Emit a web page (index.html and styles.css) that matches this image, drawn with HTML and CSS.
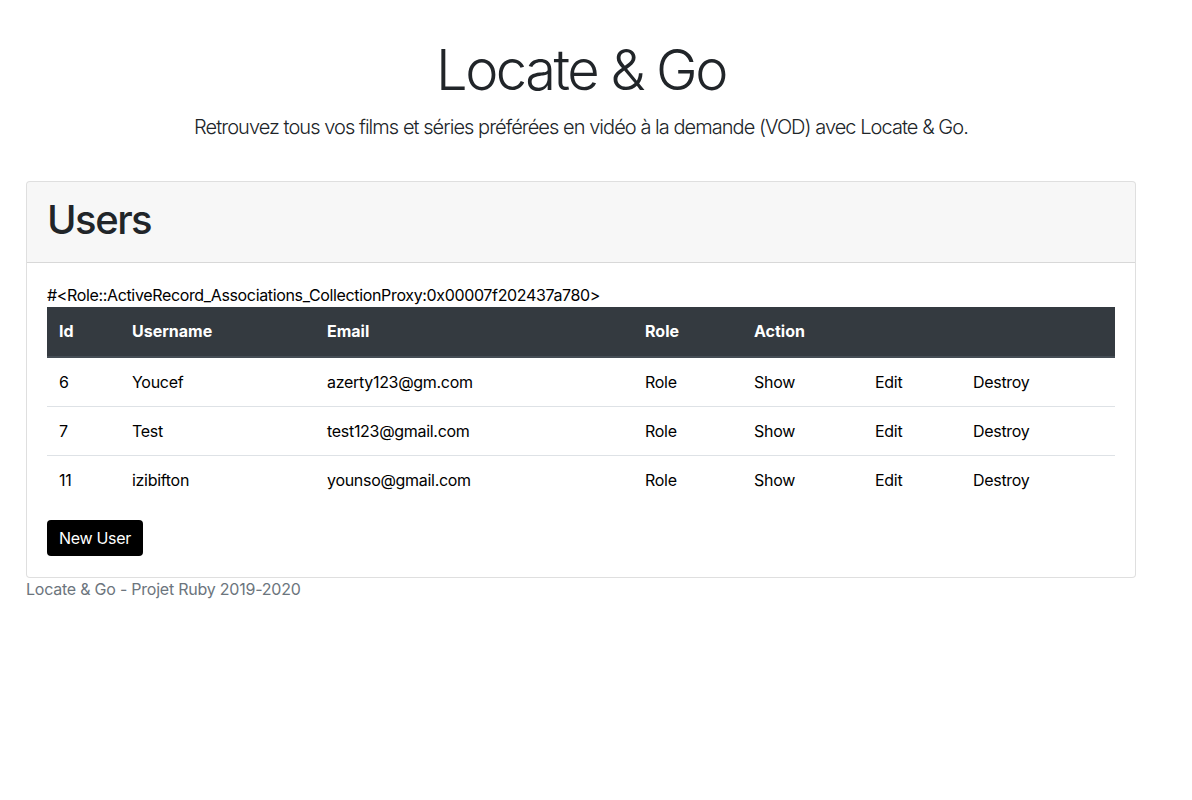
FILE: index.html
```html
<!DOCTYPE html>
<html lang="fr">
<head>
<meta charset="utf-8">
<title>Locate &amp; Go</title>
<link rel="stylesheet" href="styles.css">
</head>
<body>
<div class="page">
  <header class="hero">
    <h1 class="hero-title">Locate &amp; Go</h1>
    <p class="hero-lead">Retrouvez tous vos films et séries préférées en vidéo à la demande (VOD) avec Locate &amp; Go.</p>
  </header>
  <section class="card">
    <div class="card-header">
      <h1 class="card-title">Users</h1>
    </div>
    <div class="card-body">
      <p class="proxy">#&lt;Role::ActiveRecord_Associations_CollectionProxy:0x00007f202437a780&gt;</p>
      <table class="users">
        <colgroup>
          <col class="c-id"><col class="c-user"><col class="c-email"><col class="c-role"><col class="c-show"><col class="c-edit"><col class="c-destroy">
        </colgroup>
        <thead>
          <tr><th>Id</th><th>Username</th><th>Email</th><th>Role</th><th colspan="3">Action</th></tr>
        </thead>
        <tbody>
          <tr><td>6</td><td>Youcef</td><td>azerty123@gm.com</td><td><a href="#">Role</a></td><td><a href="#">Show</a></td><td><a href="#">Edit</a></td><td><a href="#">Destroy</a></td></tr>
          <tr><td>7</td><td>Test</td><td>test123@gmail.com</td><td><a href="#">Role</a></td><td><a href="#">Show</a></td><td><a href="#">Edit</a></td><td><a href="#">Destroy</a></td></tr>
          <tr><td>11</td><td>izibifton</td><td>younso@gmail.com</td><td><a href="#">Role</a></td><td><a href="#">Show</a></td><td><a href="#">Edit</a></td><td><a href="#">Destroy</a></td></tr>
        </tbody>
      </table>
      <a class="btn" href="#">New User</a>
    </div>
  </section>
  <footer class="footer">Locate &amp; Go - Projet Ruby 2019-2020</footer>
</div>
</body>
</html>
```
FILE: styles.css
```css
* { box-sizing: border-box; }
html, body { margin: 0; padding: 0; background: #fff; }
body {
  font-family: Inter, "Noto Sans", "Liberation Sans", sans-serif;
  font-size: 16px;
  line-height: 1.5;
  color: #212529;
  letter-spacing: -0.3px;
}
.page {
  width: 1110px;
  margin-left: 26px;
}
.hero {
  text-align: center;
  padding-top: 37px;
  padding-bottom: 23px;
}
.hero-title {
  margin: 0 0 8px;
  font-size: 56px;
  font-weight: 300;
  line-height: 1.2;
  letter-spacing: -2.5px;
}
.hero-lead {
  margin: 0 0 16px;
  font-size: 20px;
  font-weight: 300;
  line-height: 1.5;
  letter-spacing: -0.95px;
}
.card {
  border: 1px solid rgba(0,0,0,.125);
  border-radius: 4px;
  background: #fff;
}
.card-header {
  background: rgba(0,0,0,.03);
  border-bottom: 1px solid rgba(0,0,0,.125);
  padding: 14px 20px 10px;
  border-radius: 3px 3px 0 0;
}
.card-title {
  margin: 0 0 8px;
  font-size: 40px;
  font-weight: 500;
  line-height: 1.2;
  letter-spacing: -1.5px;
}
.card-body {
  padding: 20px 20px 21px;
}
.proxy {
  margin: 0;
  color: #000;
  letter-spacing: -0.35px;
}
.users {
  width: 100%;
  border-collapse: collapse;
  margin-bottom: 16px;
  color: #000;
}
.c-id { width: 73px; }
.c-user { width: 195px; }
.c-email { width: 318px; }
.c-role { width: 109px; }
.c-show { width: 121px; }
.c-edit { width: 98px; }
.c-destroy { width: 154px; }
.users th, .users td {
  padding: 12px;
  text-align: left;
  vertical-align: top;
}
.users th {
  padding-bottom: 13px;
  background: #343a40;
  color: #fff;
  font-weight: 700;
  letter-spacing: 0;
  border-bottom: 2px solid #454d55;
}
.users td {
  border-top: 1px solid #dee2e6;
}
.users tbody tr:first-child td { border-top: none; }
.users a {
  color: #000;
  text-decoration: none;
}
.btn {
  display: inline-block;
  background: #000;
  color: #fff;
  text-decoration: none;
  padding: 6px 12px;
  line-height: 24px;
  border-radius: 4px;
}
.footer {
  color: #6c757d;
  letter-spacing: -0.23px;
  line-height: 22px;
}
```
